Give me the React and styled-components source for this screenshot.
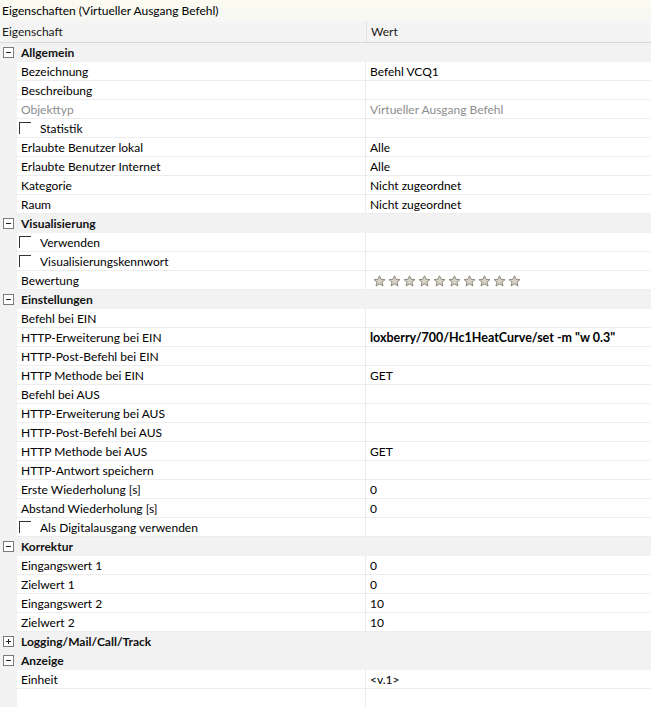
import styled, { createGlobalStyle } from "styled-components";

const GlobalStyle = createGlobalStyle`
	html, body {
		margin: 0;
		padding: 0;
		background: #ffffff;
	}
	body {
		font-family: Lato, "Noto Sans", "Liberation Sans", sans-serif;
		font-size: 12px;
		color: #000000;
	}
`;

const sections = [
	{
		title: "Allgemein",
		open: true,
		items: [
			{ name: "Bezeichnung", value: "Befehl VCQ1" },
			{ name: "Beschreibung", value: "" },
			{ name: "Objekttyp", value: "Virtueller Ausgang Befehl", muted: true },
			{ name: "Statistik", check: true },
			{ name: "Erlaubte Benutzer lokal", value: "Alle" },
			{ name: "Erlaubte Benutzer Internet", value: "Alle" },
			{ name: "Kategorie", value: "Nicht zugeordnet" },
			{ name: "Raum", value: "Nicht zugeordnet" },
		],
	},
	{
		title: "Visualisierung",
		open: true,
		items: [
			{ name: "Verwenden", check: true },
			{ name: "Visualisierungskennwort", check: true },
			{ name: "Bewertung", stars: 10 },
		],
	},
	{
		title: "Einstellungen",
		open: true,
		items: [
			{ name: "Befehl bei EIN", value: "" },
			{ name: "HTTP-Erweiterung bei EIN", value: 'loxberry/700/Hc1HeatCurve/set -m "w 0.3"', bold: true },
			{ name: "HTTP-Post-Befehl bei EIN", value: "" },
			{ name: "HTTP Methode bei EIN", value: "GET" },
			{ name: "Befehl bei AUS", value: "" },
			{ name: "HTTP-Erweiterung bei AUS", value: "" },
			{ name: "HTTP-Post-Befehl bei AUS", value: "" },
			{ name: "HTTP Methode bei AUS", value: "GET" },
			{ name: "HTTP-Antwort speichern", value: "" },
			{ name: "Erste Wiederholung [s]", value: "0" },
			{ name: "Abstand Wiederholung [s]", value: "0" },
			{ name: "Als Digitalausgang verwenden", check: true },
		],
	},
	{
		title: "Korrektur",
		open: true,
		items: [
			{ name: "Eingangswert 1", value: "0" },
			{ name: "Zielwert 1", value: "0" },
			{ name: "Eingangswert 2", value: "10" },
			{ name: "Zielwert 2", value: "10" },
		],
	},
	{ title: "Logging/Mail/Call/Track", open: false, items: [] },
	{
		title: "Anzeige",
		open: true,
		items: [{ name: "Einheit", value: "<v.1>" }],
	},
];

const Expander = ({ open }) => (
	<svg width="11" height="11" viewBox="0 0 11 11">
		<rect x="0.5" y="0.5" width="10" height="10" fill="#ffffff" stroke="#7a7a7a" />
		<line x1="3" y1="5.5" x2="8" y2="5.5" stroke="#222" />
		{!open && <line x1="5.5" y1="3" x2="5.5" y2="8" stroke="#222" />}
	</svg>
);

const Star = () => (
	<svg width="13" height="12" viewBox="0 0 13 12">
		<polygon
			points="6.5,0.8 8.1,4.3 12,4.6 9,7.1 10,11 6.5,8.9 3,11 4,7.1 1,4.6 4.9,4.3"
			fill="#d6d2c6"
			stroke="#8f8a7c"
			strokeWidth="1"
			strokeLinejoin="round"
		/>
	</svg>
);

const PropertyRow = ({ item }) => (
	<Row>
		<Gutter />
		<NameCell $muted={item.muted}>
			{item.check && <CheckBox />}
			{item.name}
		</NameCell>
		<ValueCell $muted={item.muted} $bold={item.bold}>
			{item.stars ? (
				<Stars>
					{Array.from({ length: item.stars }).map((_, i) => (
						<Star key={i} />
					))}
				</Stars>
			) : (
				item.value
			)}
		</ValueCell>
	</Row>
);

const App = () => {
	return (
		<>
			<GlobalStyle />
			<Panel>
				<TitleBar>Eigenschaften (Virtueller Ausgang Befehl)</TitleBar>
				<HeaderRow>
					<HeaderCell $first>Eigenschaft</HeaderCell>
					<HeaderCell>Wert</HeaderCell>
				</HeaderRow>
				<Grid>
					{sections.map((s) => (
						<div key={s.title}>
							<CategoryRow>
								<Gutter>
									<Expander open={s.open} />
								</Gutter>
								<CategoryLabel>{s.title}</CategoryLabel>
							</CategoryRow>
							{s.items.map((item) => (
								<PropertyRow key={item.name} item={item} />
							))}
						</div>
					))}
					<Row>
						<Gutter />
						<NameCell />
						<ValueCell />
					</Row>
					<Filler>
						<Gutter />
						<BlankName />
					</Filler>
				</Grid>
			</Panel>
		</>
	);
};

const Panel = styled.div`
	width: 651px;
	height: 707px;
	overflow: hidden;
	display: flex;
	flex-direction: column;
	background: #ffffff;
`;

const TitleBar = styled.div`
	height: 21px;
	line-height: 21px;
	padding-left: 2px;
	background: linear-gradient(#fbfbf1, #f7f7f4);
	white-space: nowrap;
	font-size: 12px;
`;

const HeaderRow = styled.div`
	display: flex;
	height: 21px;
	background: #f4f4f4;
	border-bottom: 1px solid #d8d8d8;
`;

const HeaderCell = styled.div`
	line-height: 21px;
	padding-left: ${(p) => (p.$first ? "2px" : "4px")};
	width: ${(p) => (p.$first ? "364px" : "auto")};
	flex: ${(p) => (p.$first ? "none" : "1")};
	border-right: ${(p) => (p.$first ? "1px solid #e4e4e4" : "none")};
	color: #1a1a1a;
`;

const Grid = styled.div`
	flex: 1;
	display: flex;
	flex-direction: column;
`;

const Row = styled.div`
	display: flex;
	height: 19px;
`;

const CategoryRow = styled.div`
	display: flex;
	height: 19px;
	background: #f2f2f2;
`;

const Gutter = styled.div`
	width: 17px;
	flex: none;
	background: #f2f2f2;
	display: flex;
	align-items: center;
	justify-content: center;
	box-sizing: border-box;
	padding-right: 1px;
	height: 100%;
`;

const CategoryLabel = styled.div`
	line-height: 19px;
	padding-left: 4px;
	font-weight: bold;
	color: #111;
`;

const NameCell = styled.div`
	width: 349px;
	flex: none;
	box-sizing: border-box;
	display: flex;
	align-items: center;
	padding-left: 4px;
	border-right: 1px solid #ebebeb;
	border-bottom: 1px solid #ededed;
	color: ${(p) => (p.$muted ? "#8d8d8d" : "#000")};
	white-space: nowrap;
`;

const BlankName = styled.div`
	width: 349px;
	flex: none;
	box-sizing: border-box;
	border-right: 1px solid #ebebeb;
`;

const ValueCell = styled.div`
	flex: 1;
	box-sizing: border-box;
	display: flex;
	align-items: center;
	padding-left: 4px;
	border-bottom: 1px solid #ededed;
	color: ${(p) => (p.$muted ? "#8d8d8d" : "#000")};
	font-weight: ${(p) => (p.$bold ? "bold" : "normal")};
	font-size: ${(p) => (p.$bold ? "12.5px" : "12px")};
	white-space: nowrap;
`;

const CheckBox = styled.span`
	width: 12px;
	height: 12px;
	box-sizing: border-box;
	border-top: 1px solid #333;
	border-left: 1px solid #333;
	margin: 0 9px 0 -2px;
	flex: none;
`;

const Stars = styled.div`
	display: flex;
	gap: 2px;
	padding-left: 3px;
	padding-top: 1px;
`;

const Filler = styled.div`
	flex: 1;
	display: flex;
`;

export default App;
